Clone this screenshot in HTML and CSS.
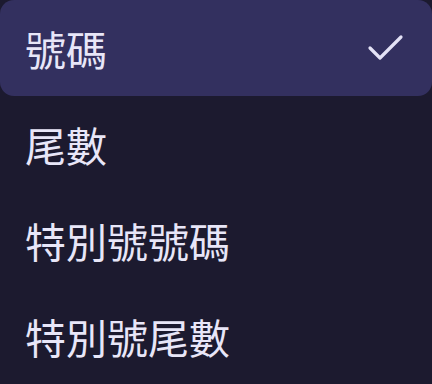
FILE: index.html
```html
<!DOCTYPE html>
<html lang="zh-Hant">
<head>
  <meta charset="UTF-8">
  <title>選單</title>
  <link rel="stylesheet" href="styles.css">
</head>
<body>
  <div class="menu">
    <div class="item selected">
      <span>號碼</span>
      <svg class="check" width="40" height="30" viewBox="0 0 40 30">
        <path d="M4 16 L14 26 L35 5" fill="none" stroke="#e4e2f6" stroke-width="3.2" stroke-linecap="round" stroke-linejoin="round"/>
      </svg>
    </div>
    <div class="item"><span>尾數</span></div>
    <div class="item"><span>特別號號碼</span></div>
    <div class="item"><span>特別號尾數</span></div>
  </div>
</body>
</html>
```

FILE: styles.css
```css
html, body {
  margin: 0;
  height: 100%;
  background: #1c1a2f;
}

body {
  font-family: "Noto Sans CJK TC", "Noto Sans", sans-serif;
  color: #e8e6f8;
}

.menu {
  width: 432px;
  height: 384px;
  display: flex;
  flex-direction: column;
  overflow: hidden;
  border-radius: 0 0 24px 24px;
}

.item {
  height: 96px;
  flex: none;
  display: flex;
  align-items: center;
  justify-content: space-between;
  padding: 0 26px 0 25px;
  font-size: 41px;
  line-height: 1;
  box-sizing: border-box;
}

.item span {
  display: block;
}

.selected {
  background: #33305f;
  border-radius: 14px;
  padding-right: 26px;
}

.check {
  display: block;
  margin-top: -2px;
}
```
